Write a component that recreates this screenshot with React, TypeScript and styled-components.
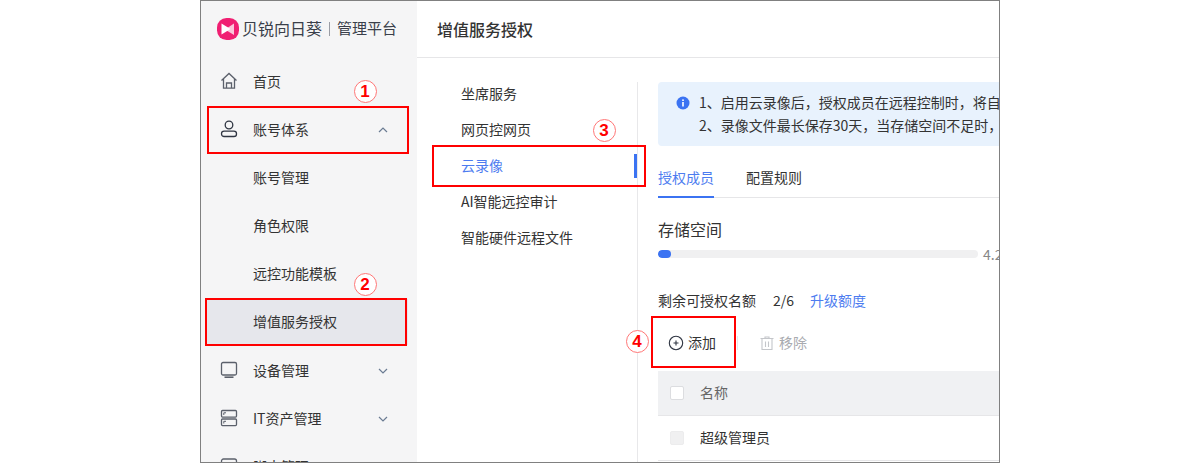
import React from 'react';
import styled, { createGlobalStyle } from 'styled-components';

const Global = createGlobalStyle`
  html, body { margin: 0; padding: 0; background: #fff; }
  * { box-sizing: border-box; }
  body { font-family: "Noto Sans CJK SC", "Noto Sans", sans-serif; color: #333; }
`;
const Page = styled.div`
  display: flex; justify-content: center; height: 463px; overflow: hidden;
`;
const Frame = styled.div`
  position: relative; width: 800px; height: 463px; border: 1px solid #808080;
  display: flex; overflow: hidden; background: #fff;
`;
const Sidebar = styled.aside`
  width: 216px; flex: none; background: #f5f5f6; display: flex; flex-direction: column;
`;
const Brand = styled.div`
  height: 57px; flex: none; display: flex; align-items: center;
  padding: 0 0 2px 16px;
`;
const BrandName = styled.span`
  font-size: 16px; color: #3a3f4a; margin-left: 3px; white-space: nowrap; padding-bottom: 2px;
`;
const BrandDivider = styled.span`
  width: 1px; height: 14px; background: #9a9da5; margin: 0 7px 0 7px;
`;
const BrandSub = styled.span`
  font-size: 15px; color: #3a3f4a; white-space: nowrap; padding-bottom: 2px;
`;
const NavList = styled.nav`
  display: flex; flex-direction: column;
`;
const NavItem = styled.div<{ $active?: boolean; $sub?: boolean }>`
  height: 48px; flex: none; display: flex; align-items: center;
  padding: 0 0 2px ${p => (p.$sub ? 52 : 19)}px;
  font-size: 14px; color: #333;
  ${p => p.$active ? `
    margin: 1px 9px 2px 5px; padding-left: 47px; background: #e6e7ec; height: 46px;
  ` : ''}
`;
const NavIcon = styled.svg`
  width: 18px; height: 18px; flex: none; margin-right: 15px; fill: none; stroke: #5b606b; stroke-width: 1.3;
`;
const NavLabel = styled.span`flex: 1; white-space: nowrap;`;
const Chevron = styled.svg`
  width: 10px; height: 10px; margin: 2px 29px 0 0; fill: none; stroke: #6b7c93; stroke-width: 1.2;
`;
const Main = styled.main`
  flex: 1; min-width: 0; display: flex; flex-direction: column;
`;
const Header = styled.header`
  height: 57px; flex: none; padding: 0 0 1px 20px; display: flex; align-items: center;
  border-bottom: 1px solid #e6e6e8; font-size: 16px; font-weight: 500; color: #333;
`;
const Body = styled.div`
  flex: 1; display: flex; min-height: 0;
`;
const SubMenu = styled.div`
  width: 221px; flex: none; margin-top: 24px; border-right: 1px solid #e8e8ea;
`;
const SubList = styled.div`
  display: flex; flex-direction: column; margin-top: -6px;
`;
const SubItem = styled.div<{ $active?: boolean }>`
  height: 36px; flex: none; padding: 0 0 2px 44px; display: flex; align-items: center; font-size: 14px; position: relative;
  color: ${p => (p.$active ? '#4d7cf0' : '#333')};
  ${p => p.$active ? `
    &::after { content: ''; position: absolute; right: 0; top: 6px; width: 3px; height: 24px; background: #3b73f2; }
  ` : ''}
`;
const Content = styled.div`
  flex: 1; min-width: 0; padding: 24px 0 0 20px; overflow: hidden;
`;
const Alert = styled.div`
  height: 64px; background: #e8f2fd; border-radius: 4px 0 0 4px; padding: 10px 0 0 18px; display: flex; width: 400px;
`;
const AlertIcon = styled.svg`
  width: 14px; height: 14px; flex: none; margin: 4px 9px 0 0;
`;
const AlertText = styled.div`
  font-size: 14px; line-height: 23px; color: #333; white-space: nowrap; margin-top: -1px;
`;
const Tabs = styled.div`
  width: 400px; margin-top: 12px; height: 40px; border-bottom: 1px solid #e6e6e8; display: flex; gap: 32px;
`;
const Tab = styled.div<{ $active?: boolean }>`
  height: 40px; font-size: 14px; line-height: 38px; width: 56px; white-space: nowrap;
  color: ${p => (p.$active ? '#4d7cf0' : '#333')};
  border-bottom: 2px solid ${p => (p.$active ? '#3b73f2' : 'transparent')};
`;
const SectionTitle = styled.div`
  margin-top: 18px; font-size: 16px; line-height: 26px; color: #333;
`;
const StorageRow = styled.div`
  margin-top: 8px; display: flex; align-items: center; height: 8px; width: 400px;
`;
const Track = styled.div`
  width: 320px; height: 8px; background: #f0f0f1; border-radius: 4px; flex: none; overflow: hidden;
`;
const Fill = styled.div`
  height: 100%; background: #3b73f2; border-radius: 4px;
`;
const StorageText = styled.span`
  margin-left: 5px; font-size: 14px; color: #888; white-space: nowrap;
`;
const Quota = styled.div`
  margin-top: 31px; height: 22px; display: flex; align-items: center; font-size: 14px; color: #333; white-space: nowrap;
`;
const QuotaValue = styled.span`
  margin-left: 17px; color: #333;
`;
const QuotaLink = styled.span`
  margin-left: 16px; color: #4d7cf0;
`;
const Toolbar = styled.div`
  margin-top: 15px; height: 36px; display: flex; align-items: center; padding: 0 0 2px 10px; font-size: 14px;
`;
const ToolButton = styled.div<{ $disabled?: boolean }>`
  display: flex; align-items: center; gap: 4px; color: ${p => (p.$disabled ? '#a9abb0' : '#333')};
`;
const ToolLabel = styled.span`
  margin-top: -2px;
`;
const ToolIcon = styled.svg`
  width: 16px; height: 16px; fill: none; stroke-width: 1.1;
`;
const ToolDivider = styled.span`
  width: 1px; height: 14px; background: #e8e8ea; margin: 0 21px 0 21px;
`;
const Table = styled.div`
  margin-top: 9px; width: 400px;
`;
const Row = styled.div<{ $head?: boolean }>`
  height: 45px; display: flex; align-items: center; padding: 0 0 2px 12px; font-size: 14px;
  background: ${p => (p.$head ? '#f0f1f3' : '#fff')};
  color: ${p => (p.$head ? '#666' : '#333')};
  border-bottom: 1px solid #e6e6e8;
`;
const Check = styled.span<{ $disabled?: boolean }>`
  width: 14px; height: 14px; border-radius: 2px; flex: none; margin: 2px 16px 0 0;
  background: ${p => (p.$disabled ? '#f0f0f1' : '#fff')};
  border: 1px solid ${p => (p.$disabled ? '#ececed' : '#dcdde0')};
`;
const RedBox = styled.div<{ $x: number; $y: number; $w: number; $h: number }>`
  position: absolute; left: ${p => p.$x - 201}px; top: ${p => p.$y - 1}px;
  width: ${p => p.$w}px; height: ${p => p.$h}px; border: 2px solid #f00; pointer-events: none;
`;
const Marker = styled.div<{ $x: number; $y: number }>`
  position: absolute; left: ${p => p.$x - 201 - 11.5}px; top: ${p => p.$y - 1 - 11.5}px;
  width: 23px; height: 23px; border-radius: 50%; border: 1px solid #f77; background: #fff;
  display: flex; align-items: center; justify-content: center;
  font-family: "Liberation Sans", sans-serif; font-size: 17px; font-weight: 700; color: #f00; line-height: 1;
`;

const Down = () => <Chevron viewBox="0 0 10 10"><path d="M1 3l4 4 4-4" /></Chevron>;
const Up = () => <Chevron viewBox="0 0 10 10"><path d="M1 7l4-4 4 4" /></Chevron>;

export default function App() {
  return (
    <>
      <Global />
      <Page>
        <Frame>
          <Sidebar>
            <Brand>
              <svg width="22" height="22" viewBox="0 0 22 22" style={{ flex: 'none' }}>
                <rect width="22" height="22" rx="9.5" fill="#f01f72" />
                <path d="M17 5.5v11.5l-9-5.5z" fill="#fbc6da" />
                <path d="M4.5 5.5l9 5.5-9 5.5z" fill="#fff" />
              </svg>
              <BrandName>贝锐向日葵</BrandName>
              <BrandDivider />
              <BrandSub>管理平台</BrandSub>
            </Brand>
            <NavList>
              <NavItem>
                <NavIcon viewBox="0 0 18 18"><path d="M1.5 8.5L9 1.5l7.5 7M3.5 7V16.2h11V7M6.5 16.2v-5.2h5v5.2" /></NavIcon>
                <NavLabel>首页</NavLabel>
              </NavItem>
              <NavItem>
                <NavIcon viewBox="0 0 18 18" style={{ stroke: '#2f3542' }}><circle cx="9" cy="5" r="3.8" /><rect x="1.5" y="11.2" width="15" height="5.3" rx="2.6" /></NavIcon>
                <NavLabel>账号体系</NavLabel>
                <Up />
              </NavItem>
              <NavItem $sub>账号管理</NavItem>
              <NavItem $sub>角色权限</NavItem>
              <NavItem $sub>远控功能模板</NavItem>
              <NavItem $active>增值服务授权</NavItem>
              <NavItem>
                <NavIcon viewBox="0 0 18 18"><rect x="1.5" y="1.5" width="15" height="12.5" rx="1.5" /><path d="M4.5 16.2h9" strokeWidth="1.6" /></NavIcon>
                <NavLabel>设备管理</NavLabel>
                <Down />
              </NavItem>
              <NavItem>
                <NavIcon viewBox="0 0 18 18"><rect x="1.5" y="1.5" width="15" height="6.6" rx="1" /><rect x="1.5" y="10" width="15" height="6.6" rx="1" /><path d="M3.8 6V3.8H6M3.8 14.5v-2.2H6" strokeWidth="1" /></NavIcon>
                <NavLabel>IT资产管理</NavLabel>
                <Down />
              </NavItem>
              <NavItem>
                <NavIcon viewBox="0 0 18 18"><rect x="1.5" y="2" width="15" height="13" rx="2" /></NavIcon>
                <NavLabel>脚本管理</NavLabel>
                <Down />
              </NavItem>
            </NavList>
          </Sidebar>
          <Main>
            <Header>增值服务授权</Header>
            <Body>
              <SubMenu>
                <SubList>
                  <SubItem>坐席服务</SubItem>
                  <SubItem>网页控网页</SubItem>
                  <SubItem $active>云录像</SubItem>
                  <SubItem>AI智能远控审计</SubItem>
                  <SubItem>智能硬件远程文件</SubItem>
                </SubList>
              </SubMenu>
              <Content>
                <Alert>
                  <AlertIcon viewBox="0 0 14 14">
                    <circle cx="7" cy="7" r="6.5" fill="#3b73f2" />
                    <rect x="6.2" y="6" width="1.6" height="4.5" fill="#fff" />
                    <rect x="6.2" y="3.4" width="1.6" height="1.6" fill="#fff" />
                  </AlertIcon>
                  <AlertText>
                    {'1、启用云录像后\uFF0C授权成员在远程控制时\uFF0C将自动录制'}<br />
                    {'2、录像文件最长保存30天\uFF0C当存储空间不足时\uFF0C将自动覆盖'}
                  </AlertText>
                </Alert>
                <Tabs>
                  <Tab $active>授权成员</Tab>
                  <Tab>配置规则</Tab>
                </Tabs>
                <SectionTitle>存储空间</SectionTitle>
                <StorageRow>
                  <Track><Fill style={{ width: '4%' }} /></Track>
                  <StorageText>4.2</StorageText>
                </StorageRow>
                <Quota>
                  剩余可授权名额
                  <QuotaValue>2/6</QuotaValue>
                  <QuotaLink>升级额度</QuotaLink>
                </Quota>
                <Toolbar>
                  <ToolButton>
                    <ToolIcon viewBox="0 0 16 16" stroke="#2f3542"><circle cx="8" cy="8" r="6.7" /><path d="M5.5 8h5M8 5.5v5" /></ToolIcon>
                    <ToolLabel>添加</ToolLabel>
                  </ToolButton>
                  <ToolDivider />
                  <ToolButton $disabled>
                    <ToolIcon viewBox="0 0 16 16" stroke="#c4c6ca"><path d="M1.5 3.5h13M6 3.5V2h4v1.5M3 3.5V14.5h10V3.5M6.5 6.5v5.5M9.5 6.5v5.5" /></ToolIcon>
                    <ToolLabel>移除</ToolLabel>
                  </ToolButton>
                </Toolbar>
                <Table>
                  <Row $head><Check />名称</Row>
                  <Row><Check $disabled />超级管理员</Row>
                </Table>
              </Content>
            </Body>
          </Main>
          <RedBox $x={207} $y={106} $w={202} $h={48} />
          <RedBox $x={205} $y={298} $w={202} $h={48} />
          <RedBox $x={432} $y={145} $w={214} $h={42} />
          <RedBox $x={651} $y={316} $w={85} $h={52} />
          <Marker $x={365} $y={91}>1</Marker>
          <Marker $x={365} $y={284}>2</Marker>
          <Marker $x={604} $y={130}>3</Marker>
          <Marker $x={637} $y={341}>4</Marker>
        </Frame>
      </Page>
    </>
  );
}
